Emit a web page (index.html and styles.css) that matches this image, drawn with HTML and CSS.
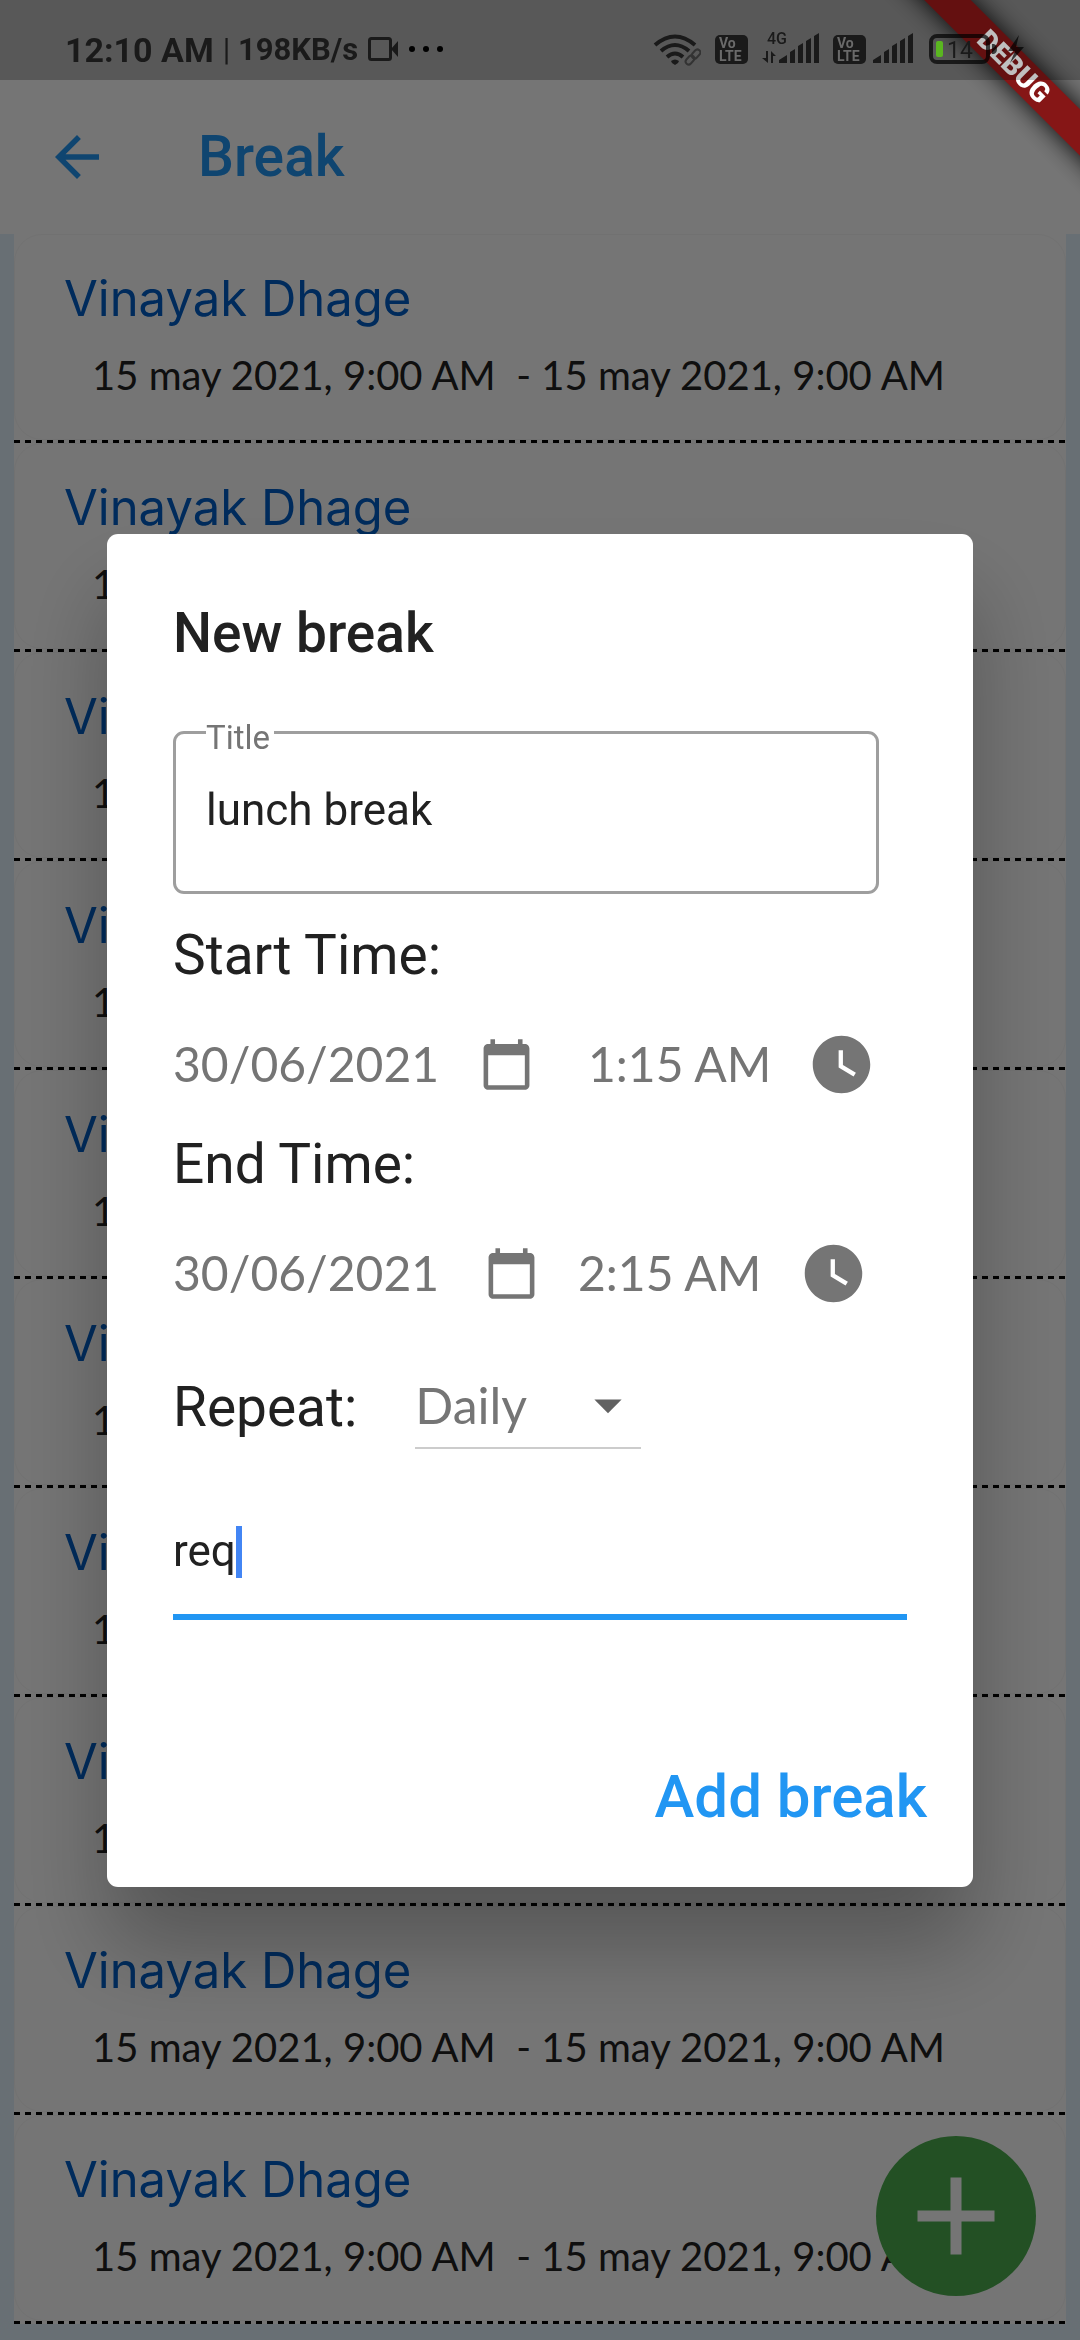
FILE: index.html
```html
<!DOCTYPE html>
<html lang="en">
<head>
<meta charset="utf-8">
<meta name="viewport" content="width=device-width">
<title>Break</title>
<link rel="stylesheet" href="styles.css">
</head>
<body>
<div class="app">
  <header class="app-bar">
    <button class="icon-button" type="button" aria-label="Back">
      <svg width="66" height="66" viewBox="0 0 24 24"><path fill="currentColor" d="M20 11H7.830l5.590-5.590L12 4l-8 8 8 8 1.410-1.410L7.830 13H20v-2z"/></svg>
    </button>
    <h1 class="app-title">Break</h1>
  </header>
  <ul class="breaks">
    <li class="break"><div class="card"><h2 class="name">Vinayak Dhage</h2><p class="period">15 may 2021, 9:00 AM  - 15 may 2021, 9:00 AM</p></div></li>
    <li class="break"><div class="card"><h2 class="name">Vinayak Dhage</h2><p class="period">15 may 2021, 9:00 AM  - 15 may 2021, 9:00 AM</p></div></li>
    <li class="break"><div class="card"><h2 class="name">Vinayak Dhage</h2><p class="period">15 may 2021, 9:00 AM  - 15 may 2021, 9:00 AM</p></div></li>
    <li class="break"><div class="card"><h2 class="name">Vinayak Dhage</h2><p class="period">15 may 2021, 9:00 AM  - 15 may 2021, 9:00 AM</p></div></li>
    <li class="break"><div class="card"><h2 class="name">Vinayak Dhage</h2><p class="period">15 may 2021, 9:00 AM  - 15 may 2021, 9:00 AM</p></div></li>
    <li class="break"><div class="card"><h2 class="name">Vinayak Dhage</h2><p class="period">15 may 2021, 9:00 AM  - 15 may 2021, 9:00 AM</p></div></li>
    <li class="break"><div class="card"><h2 class="name">Vinayak Dhage</h2><p class="period">15 may 2021, 9:00 AM  - 15 may 2021, 9:00 AM</p></div></li>
    <li class="break"><div class="card"><h2 class="name">Vinayak Dhage</h2><p class="period">15 may 2021, 9:00 AM  - 15 may 2021, 9:00 AM</p></div></li>
    <li class="break"><div class="card"><h2 class="name">Vinayak Dhage</h2><p class="period">15 may 2021, 9:00 AM  - 15 may 2021, 9:00 AM</p></div></li>
    <li class="break"><div class="card"><h2 class="name">Vinayak Dhage</h2><p class="period">15 may 2021, 9:00 AM  - 15 may 2021, 9:00 AM</p></div></li>
  </ul>
  <button class="fab" type="button" aria-label="New break">
    <svg width="132" height="132" viewBox="0 0 24 24"><path fill="currentColor" d="M19 13h-6v6h-2v-6H5v-2h6V5h2v6h6v2z"/></svg>
  </button>
</div>

<div class="scrim">
  <form class="dialog" role="dialog" aria-labelledby="dialog-title">
    <h2 class="dialog-title" id="dialog-title">New break</h2>

    <div class="outlined-field">
      <label class="field-label" for="title">Title</label>
      <input class="text-input" id="title" type="text" value="lunch break">
    </div>

    <h3 class="section-label">Start Time:</h3>
    <div class="time-row time-row-start">
      <span>30/06/2021</span>
      <button class="icon-button" type="button" aria-label="Pick start date">
        <svg width="55" height="55" viewBox="0 0 24 24"><path fill="currentColor" d="M20 3h-1V1h-2v2H7V1H5v2H4c-1.100 0-2 .9-2 2v16c0 1.100.9 2 2 2h16c1.100 0 2-.9 2-2V5c0-1.100-.9-2-2-2zm0 18H4V8h16v13z"/></svg>
      </button>
      <span>1:15 AM</span>
      <button class="icon-button" type="button" aria-label="Pick start time">
        <svg width="69" height="69" viewBox="0 0 24 24"><path fill="currentColor" d="M12 2C6.500 2 2 6.500 2 12s4.500 10 10 10 10-4.500 10-10S17.500 2 12 2zm4.200 14.200L11 13V7h1.500v5.200l4.500 2.700-.8 1.300z"/></svg>
      </button>
    </div>

    <h3 class="section-label section-label-end">End Time:</h3>
    <div class="time-row time-row-end">
      <span>30/06/2021</span>
      <button class="icon-button" type="button" aria-label="Pick end date">
        <svg width="55" height="55" viewBox="0 0 24 24"><path fill="currentColor" d="M20 3h-1V1h-2v2H7V1H5v2H4c-1.100 0-2 .9-2 2v16c0 1.100.9 2 2 2h16c1.100 0 2-.9 2-2V5c0-1.100-.9-2-2-2zm0 18H4V8h16v13z"/></svg>
      </button>
      <span>2:15 AM</span>
      <button class="icon-button" type="button" aria-label="Pick end time">
        <svg width="69" height="69" viewBox="0 0 24 24"><path fill="currentColor" d="M12 2C6.500 2 2 6.500 2 12s4.500 10 10 10 10-4.500 10-10S17.500 2 12 2zm4.200 14.200L11 13V7h1.500v5.200l4.500 2.700-.8 1.300z"/></svg>
      </button>
    </div>

    <div class="repeat-row">
      <label class="repeat-label" for="repeat">Repeat:</label>
      <div class="select-wrap">
        <select class="select" id="repeat"><option>Daily</option><option>Weekly</option></select>
        <svg class="select-arrow" width="66" height="60" viewBox="0 1 24 22"><path fill="currentColor" d="M7 10l5 5 5-5z"/></svg>
      </div>
    </div>

    <div class="note-field">
      <input class="text-input note-input" type="text" value="req" aria-label="Note">
      <span class="caret"></span>
    </div>

    <div class="actions">
      <button class="text-button" type="button">Add break</button>
    </div>
  </form>
</div>

<div class="debug-banner">DEBUG</div>

<div class="status-bar">
  <div class="status-left">
    <span class="clock">12:10 AM</span>
    <span class="speed"><span class="divider">|</span> 198KB/s</span>
    <svg width="76" height="80" viewBox="370 0 76 80">
      <rect x="372.500" y="38.500" width="21" height="21" rx="2" fill="none" stroke="#1a1a1a" stroke-width="3"/>
      <path d="M394 49l7-8v16z" fill="#1a1a1a"/>
      <circle cx="415" cy="49" r="3"/><circle cx="429" cy="49" r="3"/><circle cx="443" cy="49" r="3"/>
    </svg>
  </div>
  <div class="status-right">
    <svg width="48" height="80" viewBox="653 0 48 80">
      <g fill="none" stroke="#1a1a1a" stroke-width="4">
        <path d="M655 45q20-17 40 0"/><path d="M661 51q14-12 28 0"/><path d="M667 57q8-7 16 0"/>
      </g>
      <path d="M671 61q4-3 8 0l-1 2-3 2-3-2z" fill="#1a1a1a"/>
      <g fill="none" stroke="#333" stroke-width="2">
        <rect x="-5" y="-3" width="10" height="6" rx="3" transform="translate(690 60) rotate(-48)"/>
        <rect x="-5" y="-3" width="10" height="6" rx="3" transform="translate(696 54) rotate(-48)"/>
      </g>
    </svg>
    <svg width="33" height="80" viewBox="715 0 33 80">
      <rect x="715" y="35" width="33" height="29" rx="5" fill="#1a1a1a"/>
      <text class="volte" x="719" y="48">Vo</text><text class="volte" x="719" y="61">LTE</text>
    </svg>
    <svg width="57" height="80" viewBox="762 0 57 80">
      <text class="network" x="767" y="44">4G</text>
      <path d="M762 58h4V51h2v12zM771 63V51l5 5h-3v7z" fill="#1a1a1a"/>
      <path d="M779 63v-3l8-5v8zM790 63V52l5-3v14zM798 63V46l5-3v20zM806 63V41l5-3v25zM814 63V36l5-3v30z" fill="#1a1a1a"/>
    </svg>
    <svg width="80" height="80" viewBox="833 0 80 80">
      <rect x="833" y="35" width="33" height="29" rx="5" fill="#1a1a1a"/>
      <text class="volte" x="837" y="48">Vo</text><text class="volte" x="837" y="61">LTE</text>
      <path d="M873 63v-3l8-5v8zM884 63V52l5-3v14zM892 63V46l5-3v20zM900 63V41l5-3v25zM908 63V36l5-3v30z" fill="#1a1a1a"/>
    </svg>
    <svg width="97" height="80" viewBox="927 0 97 80">
      <rect x="931" y="36" width="57" height="26" rx="6" fill="none" stroke="#000" stroke-opacity=".7" stroke-width="4"/>
      <path d="M992 44h2q3 1 3 5t-3 5h-2z" fill="#000" fill-opacity=".7"/>
      <rect x="936" y="41" width="7" height="16" rx="2" fill="#5ab620"/>
      <text class="battery" x="947" y="58">14</text>
      <path d="M1019 35l-11 16h7l-5 12 14-16h-8z" fill="#000" fill-opacity=".7"/>
    </svg>
  </div>
</div>
</body>
</html>
```

FILE: styles.css
```css
* { box-sizing: border-box; }

body {
  margin: 0;
  font-family: Roboto, "Liberation Sans", sans-serif;
  font-size: 44px;
  color: #212121;
}

h1, h2, h3, p, ul { margin: 0; padding: 0; }

svg { display: block; }

button {
  padding: 0;
  border: 0;
  background: none;
  color: inherit;
  font: inherit;
}

/* Page behind the dialog */
.app {
  min-height: 100vh;
  padding-top: 80px;
  background: #e3f2fd;
}

.app-bar {
  display: flex;
  align-items: center;
  gap: 88px;
  height: 154px;
  padding: 0 44px;
  background: #fff;
  color: #2196f3;
}

.app::before {
  content: "";
  position: absolute;
  inset: 0 0 auto;
  height: 80px;
  background: #fff;
}

.app-title {
  font-size: 57px;
  line-height: 66px;
  font-weight: 500;
}

.breaks {
  list-style: none;
  margin: 0 14px;
}

.break { background: #fff; }

.break::after {
  content: "";
  display: block;
  height: 3px;
  background: repeating-linear-gradient(90deg, #000 0 6px, transparent 6px 11px);
}

.card {
  padding: 34px 49px 39px;
  border: 1px solid #f7f7f7;
  border-radius: 28px;
}

.name {
  font-family: Inter, sans-serif;
  font-size: 49px;
  line-height: 60px;
  font-weight: 400;
  color: #005fc8;
}

.period {
  margin-top: 22px;
  padding-left: 28px;
  font-family: Lato, sans-serif;
  font-size: 40px;
  line-height: 49px;
  white-space: pre;
}

.fab {
  position: fixed;
  right: 44px;
  bottom: 44px;
  display: grid;
  place-items: center;
  width: 160px;
  height: 160px;
  border-radius: 50%;
  background: #4caf50;
  color: #fff;
}

/* Dialog */
.scrim {
  position: fixed;
  inset: 0;
  display: flex;
  align-items: center;
  padding: 80px 107px 0;
  background: rgba(0, 0, 0, .54);
}

.dialog {
  flex: 1;
  padding: 67px 66px 54px;
  border-radius: 11px;
  background: #fff;
  box-shadow: 0 60px 90px rgba(0, 0, 0, .28);
}

.dialog-title {
  font-size: 55px;
  line-height: 64px;
  font-weight: 500;
}

.outlined-field {
  position: relative;
  margin: 66px 28px 29px 0;
}

.field-label {
  position: absolute;
  top: -12px;
  left: 33px;
  padding-right: 4px;
  background: #fff;
  font-size: 33px;
  line-height: 38px;
  color: #757575;
}

.text-input {
  display: block;
  width: 100%;
  border: 3px solid #9e9e9e;
  border-radius: 11px;
  padding: 50px 30px 55px;
  background: none;
  color: inherit;
  font: inherit;
  line-height: 52px;
  height: 163px;
  outline: 0;
}

.section-label,
.repeat-label {
  font-size: 55px;
  line-height: 64px;
  font-weight: 400;
}

.section-label-end { margin-top: 33px; }

.time-row {
  display: grid;
  align-items: center;
  margin-top: 43px;
  font-family: Lato, sans-serif;
  font-size: 48px;
  line-height: 60px;
  color: #757575;
}

.time-row-start { grid-template-columns: 306px 109px 219px 69px; }
.time-row-end { grid-template-columns: 311px 94px 221px 69px; }

.repeat-row {
  display: flex;
  align-items: flex-start;
  gap: 58px;
  margin-top: 67px;
}

.select-wrap { position: relative; }

.select {
  display: block;
  appearance: none;
  width: 226px;
  padding: 0 66px 12px 0;
  border: 0;
  border-bottom: 2px solid #ccc;
  border-radius: 0;
  background: none;
  font-family: Lato, sans-serif;
  font-size: 50px;
  line-height: 60px;
  color: #757575;
}

.select-arrow {
  position: absolute;
  top: 0;
  right: 0;
  color: #616161;
  pointer-events: none;
}

.note-field {
  position: relative;
  margin-top: 76px;
}

.note-input {
  height: 95px;
  padding: 0 0 37px;
  border-width: 0 0 6px;
  border-color: #2196f3;
  border-radius: 0;
}

.caret {
  position: absolute;
  top: 1px;
  left: 63px;
  width: 6px;
  height: 52px;
  background: #4285f4;
}

.actions {
  display: flex;
  justify-content: flex-end;
  margin: 141px -20px 0 0;
}

.text-button {
  font-size: 60px;
  line-height: 72px;
  font-weight: 500;
  color: #2196f3;
}

/* Overlays */
.debug-banner {
  position: fixed;
  top: 50px;
  right: -134px;
  width: 400px;
  transform: rotate(45deg);
  background: #861616;
  box-shadow: 0 0 26px rgba(0, 0, 0, .95);
  font-size: 28px;
  line-height: 33px;
  font-weight: 900;
  text-align: center;
  color: #fff;
}

.status-bar {
  position: fixed;
  inset: 0 0 auto;
  display: flex;
  justify-content: space-between;
  height: 80px;
  padding: 0 56px 0 65px;
  overflow: hidden;
  background: rgba(0, 0, 0, .25);
  color: #1a1a1a;
}

.status-left {
  display: flex;
  align-items: center;
  gap: 9px;
  padding-top: 20px;
  height: 80px;
  font-weight: 700;
  line-height: 40px;
}

.status-left svg { margin-top: -20px; }

.clock { font-size: 34px; }
.speed { font-size: 31px; }
.divider { font-weight: 400; }

.status-right {
  display: flex;
  gap: 14px;
}

.volte {
  font-size: 14px;
  font-weight: 700;
  fill: #6a6a6a;
}

.network {
  font-size: 16px;
  font-weight: 500;
  fill: #1a1a1a;
}

.battery {
  font-size: 23px;
  fill: #1a1a1a;
}
```
